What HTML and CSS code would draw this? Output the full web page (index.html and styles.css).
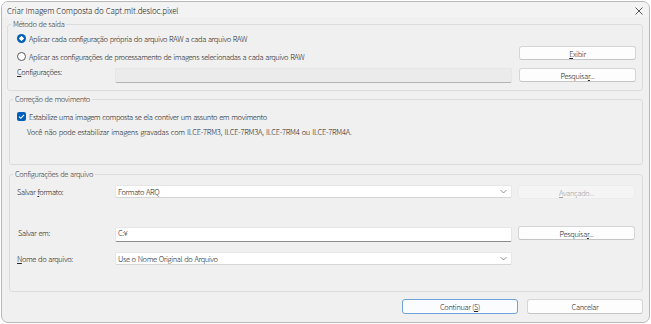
FILE: index.html
```html
<!DOCTYPE html>
<html lang="pt">
<head>
    <meta charset="UTF-8">
    <title>Criar Imagem Composta do Capt.mlt.desloc.pixel</title>
    <link rel="stylesheet" href="styles.css">
</head>
<body>
    <div class="window">
        <div class="titlebar">
            <span class="title">Criar Imagem Composta do Capt.mlt.desloc.pixel</span>
            <svg class="close" width="8" height="8" viewBox="0 0 8 8">
                <path d="M0.5 0.5 L7.5 7.5 M7.5 0.5 L0.5 7.5" stroke="#444" stroke-width="0.9" fill="none"/>
            </svg>
        </div>

        <div class="main">
            <!-- Metodo de saida -->
            <div class="group group-output">
                <span class="group-title">Método de saída</span>
                <div class="output-left">
                    <label class="option opt-1">
                        <span class="radio checked"></span>
                        Aplicar cada configuração própria do arquivo RAW a cada arquivo RAW
                    </label>
                    <label class="option opt-2">
                        <span class="radio"></span>
                        Aplicar as configurações de processamento de imagens selecionadas a cada arquivo RAW
                    </label>
                    <div class="config-row">
                        <span class="row-label"><u>C</u>onfigurações:</span>
                        <div class="field disabled"></div>
                    </div>
                </div>
                <div class="output-right">
                    <button class="btn"><u>E</u>xibir</button>
                    <button class="btn">Pesquisa<u>r</u>...</button>
                </div>
            </div>

            <!-- Correcao de movimento -->
            <div class="group group-motion">
                <span class="group-title">Correção de movimento</span>
                <label class="option check-row">
                    <span class="checkbox">
                        <svg width="9" height="9" viewBox="0 0 9 9">
                            <path d="M2 4.6 L3.8 6.3 L7 2.8" stroke="#fff" stroke-width="1.1" fill="none"/>
                        </svg>
                    </span>
                    Estabilize uma imagem composta se ela contiver um assunto em movimento
                </label>
                <p class="note">Você não pode estabilizar imagens gravadas com ILCE-7RM3, ILCE-7RM3A, ILCE-7RM4 ou ILCE-7RM4A.</p>
            </div>

            <!-- Configuracoes de arquivo -->
            <div class="group group-file">
                <span class="group-title">Configurações de arquivo</span>
                <div class="file-row row-format">
                    <span class="row-label">Salvar <u>f</u>ormato:</span>
                    <div class="field select">
                        <span>Formato ARQ</span>
                        <svg width="7" height="5" viewBox="0 0 7 5"><path d="M0.5 1 L3.5 4 L6.5 1" stroke="#777" stroke-width="0.8" fill="none"/></svg>
                    </div>
                    <button class="btn btn-disabled"><u>A</u>vançado...</button>
                </div>
                <div class="file-row row-folder">
                    <span class="row-label label-folder">Salvar em:</span>
                    <div class="field text-field"><span>C:¥</span></div>
                    <button class="btn">Pesquisa<u>r</u>...</button>
                </div>
                <div class="file-row row-name">
                    <span class="row-label"><u>N</u>ome do arquivo:</span>
                    <div class="field select">
                        <span>Use o Nome Original do Arquivo</span>
                        <svg width="7" height="5" viewBox="0 0 7 5"><path d="M0.5 1 L3.5 4 L6.5 1" stroke="#777" stroke-width="0.8" fill="none"/></svg>
                    </div>
                    <div class="btn-space"></div>
                </div>
            </div>

            <div class="actions">
                <button class="btn btn-default">Continuar (<u>S</u>)</button>
                <button class="btn">Cancelar</button>
            </div>
        </div>
    </div>
</body>
</html>
```

FILE: styles.css
```css
* {
    margin: 0;
    padding: 0;
    box-sizing: border-box;
}

body {
    width: 651px;
    height: 324px;
    overflow: hidden;
    background: #ffffff;
    font-family: "Noto Sans CJK JP", "Noto Sans", sans-serif;
    font-size: 7.5px;
    font-weight: 300;
    letter-spacing: -0.4px;
    word-spacing: 0.8px;
    color: #262626;
}

.window {
    width: 649px;
    height: 322px;
    margin: 1px;
    border: 1px solid #b8b8b8;
    border-radius: 7px;
    background: #f0f0f0;
    display: flex;
    flex-direction: column;
    overflow: hidden;
}

.titlebar {
    height: 15px;
    display: flex;
    align-items: center;
    justify-content: space-between;
    padding: 2px 6px 0 5px;
    background: #f3f3f3;
}

.title {
    font-size: 8px;
    letter-spacing: -0.15px;
    word-spacing: 0.5px;
    color: #202020;
}

.main {
    display: flex;
    flex-direction: column;
    padding: 0 6px 0 5px;
}

/* group boxes */
.group {
    position: relative;
    border: 1px solid #dcdcdc;
    border-radius: 3px;
}

.group-title {
    position: absolute;
    top: -6px;
    left: 3px;
    padding: 0 2px;
    line-height: 10px;
    background: #f0f0f0;
    color: #3a3a3a;
}

.option {
    display: flex;
    align-items: center;
    gap: 3px;
    height: 14px;
    white-space: nowrap;
}

.radio {
    width: 9px;
    height: 9px;
    border-radius: 50%;
    border: 1px solid #5a5a5a;
    background: #fff;
    flex-shrink: 0;
}

.radio.checked {
    border: none;
    background: radial-gradient(circle, #fff 0 2px, #005fb8 2.3px);
}

.checkbox {
    width: 9px;
    height: 9px;
    border-radius: 2px;
    background: #005fb8;
    display: flex;
    flex-shrink: 0;
}

.row-label {
    white-space: nowrap;
}

.field {
    background: #fff;
    border: 1px solid #e6e6e6;
    border-radius: 2px;
}

.field.disabled {
    background: #ebebeb;
    border-bottom-color: #b4b4b4;
}

.select {
    display: flex;
    align-items: center;
    justify-content: space-between;
    padding: 0 4px 0 2px;
    border-bottom-color: #d6d6d6;
}

.text-field {
    padding: 0 2px;
    border-bottom: 1px solid #8c8c8c;
}

.btn {
    height: 14px;
    font-family: inherit;
    font-size: 7.5px;
    font-weight: 300;
    letter-spacing: -0.35px;
    color: #262626;
    background: #fdfdfd;
    border: 1px solid #d5d5d5;
    border-bottom-color: #c4c4c4;
    border-radius: 3px;
}

.btn-disabled {
    color: #a2a2a2;
    background: #f5f5f5;
    border-color: #ececec;
}

.btn-default {
    border: 1px solid #6fa3d8;
    background: #fbfcfd;
}

/* metodo de saida */
.group-output {
    margin-top: 7px;
    display: flex;
    gap: 7px;
    padding: 0 6px 7px 9px;
}

.output-left {
    flex: 1;
    display: flex;
    flex-direction: column;
}

.opt-1 {
    margin-top: 6px;
}

.opt-2 {
    margin-top: 4px;
}

.config-row {
    display: flex;
    margin-top: 5px;
}

.config-row .row-label {
    width: 98px;
    line-height: 7px;
}

.config-row .field {
    flex: 1;
    height: 15px;
}

.output-right {
    width: 117px;
    display: flex;
    flex-direction: column;
    gap: 8px;
    padding-top: 21px;
}

/* correcao de movimento */
.group-motion {
    margin: 8px 0 0 2px;
    padding: 9px 8px 25px 7px;
}

.note {
    margin: 2px 0 0 10px;
    line-height: 14px;
    letter-spacing: -0.25px;
}

/* configuracoes de arquivo */
.group-file {
    margin: 9px 0 0 2px;
    padding: 10px 7px 26px 7px;
    display: flex;
    flex-direction: column;
}

.file-row {
    display: flex;
    align-items: flex-start;
    gap: 6px;
}

.file-row .row-label {
    width: 92px;
    line-height: 13px;
}

.file-row .field {
    flex: 1;
}

.file-row .btn,
.btn-space {
    width: 117px;
}

.row-format .select {
    height: 13px;
}

.row-format .btn {
    height: 14px;
}

.row-folder {
    margin-top: 27px;
}

.row-folder .label-folder {
    padding-left: 1px;
    line-height: 13px;
}

.row-folder .field {
    height: 15px;
    line-height: 10px;
    margin-top: 1px;
}

.row-name {
    margin-top: 10px;
}

.row-name .select {
    height: 13px;
}

.actions {
    display: flex;
    justify-content: flex-end;
    gap: 9px;
    margin-top: 7px;
}

.actions .btn {
    width: 116px;
    height: 15px;
}
```
